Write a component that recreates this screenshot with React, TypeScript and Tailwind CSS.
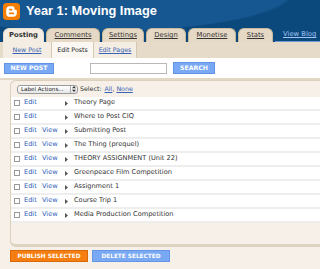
import React from "react";

const rows: { title: string; view: boolean }[] = [
  { title: "Theory Page", view: false },
  { title: "Where to Post CIQ", view: false },
  { title: "Submitting Post", view: true },
  { title: "The Thing (prequel)", view: true },
  { title: "THEORY ASSIGNMENT (Unit 22)", view: true },
  { title: "Greenpeace Film Competition", view: true },
  { title: "Assignment 1", view: true },
  { title: "Course Trip 1", view: true },
  { title: "Media Production Competition", view: true },
];

const tabs = [
  { label: "Posting", w: "w-[41px]", active: true },
  { label: "Comments", w: "w-[54px]", active: false },
  { label: "Settings", w: "w-[42px]", active: false },
  { label: "Design", w: "w-[40px]", active: false },
  { label: "Monetise", w: "w-[48px]", active: false },
  { label: "Stats", w: "w-[35px]", active: false },
];

function BloggerLogo() {
  return (
    <svg width="17" height="17" viewBox="0 0 24 24">
      <rect x="0" y="0" width="24" height="24" rx="5" fill="#f57d00" />
      <path
        d="M9 4.5h4.2c2 0 3 1.2 3 2.8v1.4c0 .6.4.9 1 .9h.6c.9 0 1.7.7 1.7 1.7v3.6c0 2.8-2.2 4.6-4.8 4.6H9c-2.6 0-4.5-2-4.5-4.5V9c0-2.6 2-4.5 4.5-4.5z"
        fill="#fff"
      />
      <rect x="8.4" y="8.2" width="5" height="2.3" rx="1.15" fill="#f57d00" />
      <rect x="8.4" y="13.5" width="7.4" height="2.3" rx="1.15" fill="#f57d00" />
    </svg>
  );
}

export default function App() {
  return (
    <div className="w-[320px] h-[269px] overflow-hidden bg-[#f6f0e8] font-['DejaVu_Sans',sans-serif]">
      {/* header */}
      <div className="h-[42px] bg-[#0b487b] bg-[radial-gradient(ellipse_200px_40px_at_95px_-8px,#175791_97%,transparent_100%)] flex flex-col">
        <div className="flex items-center h-[17px] mt-[3px] pl-[3px] gap-[6px]">
          <BloggerLogo />
          <span className="font-['Liberation_Sans',sans-serif] font-bold text-[12.8px] text-white leading-none">
            Year 1: Moving Image
          </span>
        </div>
        <div className="flex items-end h-[14px] mt-[8px] pl-[3px] gap-[2px]">
          {tabs.map((t) => (
            <div
              key={t.label}
              className={`${t.w} h-[14px] rounded-t-[6px] border border-b-0 flex items-center justify-center text-[6.8px] text-[#333] ${
                t.active
                  ? "bg-[#f4ede3] border-[#e8dfd1] font-bold"
                  : "bg-[#e5d9c6] border-[#c9b99e] underline"
              }`}
            >
              {t.label}
            </div>
          ))}
          <div className="flex-1 h-[14px] flex items-center pl-[8px] border-b border-[#6d9ad6] whitespace-nowrap">
            <span className="text-[6.8px] text-[#a3c6f7] underline">View Blog</span>
          </div>
        </div>
      </div>

      {/* sub tabs */}
      <div className="h-[16px] bg-[#e6dbc9] flex pl-[3px] text-[6.3px]">
        <div className="w-[49px] bg-[#f4ede3] border-r border-[#d6c8b1] flex items-center justify-center">
          <span className="text-[#3a63b6] underline">New Post</span>
        </div>
        <div className="w-[42px] bg-[#fbf8f4] border-r border-[#d6c8b1] flex items-center justify-center">
          <span className="text-[#222]">Edit Posts</span>
        </div>
        <div className="w-[43px] bg-[#f4ede3] border-r border-[#d6c8b1] flex items-center justify-center">
          <span className="text-[#3a63b6] underline">Edit Pages</span>
        </div>
      </div>

      {/* toolbar */}
      <div className="h-[22px] bg-white border-b-2 border-[#e3d8c6] flex items-center pl-[4px]">
        <div className="w-[50px] h-[11px] bg-[#79a8f4] border border-[#6093e4] flex items-center justify-center">
          <span className="text-white font-bold text-[6.2px]">NEW POST</span>
        </div>
        <div className="ml-[36px] w-[77px] h-[11px] border border-[#b8b8b8] bg-white" />
        <div className="ml-[6px] w-[42px] h-[12px] bg-[#79a8f4] border border-[#6093e4] flex items-center justify-center">
          <span className="text-white font-bold text-[6.2px]">SEARCH</span>
        </div>
      </div>

      {/* panel */}
      <div className="ml-[10px] w-[330px] border border-[#dccfbb] border-b-[3px] border-b-[#ded3c1] rounded-[6px] bg-[#f6f0e8] pb-[21px]">
        <div className="h-[16px] flex items-center pl-[6px] text-[6.3px]">
          <div className="w-[61px] h-[9px] border border-[#9a9a9a] rounded-[3px] bg-gradient-to-b from-white to-[#e6e6e6] flex items-center">
            <span className="flex-1 pl-[3px] text-[5.6px] text-[#222]">Label Actions...</span>
            <div className="w-[7px] h-full border-l border-[#aaa] flex items-center justify-center">
              <svg width="4" height="6" viewBox="0 0 4 6">
                <path d="M2 0L4 2.3H0z M2 6L4 3.7H0z" fill="#333" />
              </svg>
            </div>
          </div>
          <span className="ml-[2px] text-[#333]">Select:</span>
          <span className="ml-[3px] text-[#3a63b6] underline">All</span>
          <span className="text-[#333]">,</span>
          <span className="ml-[2px] text-[#3a63b6] underline">None</span>
        </div>
        <div className="bg-white">
          {rows.map((r) => (
            <div
              key={r.title}
              className="h-[14px] flex items-center border-b-2 border-[#eeeeee] pl-[3px] text-[6.6px]"
            >
              <div className="w-[10px]">
                <div className="w-[6px] h-[6px] border border-[#999] bg-white" />
              </div>
              <span className="w-[18px] text-[#2d5bb5]">Edit</span>
              <span className="w-[22px] text-[#2d5bb5]">{r.view ? "View" : ""}</span>
              <div className="w-[10px] pl-[1px]">
                <svg width="3" height="5" viewBox="0 0 3 5">
                  <path d="M0 0L3 2.5L0 5z" fill="#555" />
                </svg>
              </div>
              <span className="text-[#333] whitespace-nowrap">{r.title}</span>
            </div>
          ))}
        </div>
      </div>

      {/* bottom buttons */}
      <div className="flex pl-[10px] gap-[4px] mt-[3px]">
        <div className="w-[78px] h-[12px] bg-[#f67e10] border border-[#d86a08] flex items-center justify-center">
          <span className="text-white font-bold text-[5.8px]">PUBLISH SELECTED</span>
        </div>
        <div className="w-[78px] h-[12px] bg-[#7aa9f3] border border-[#6396e6] flex items-center justify-center">
          <span className="text-white font-bold text-[5.8px] whitespace-nowrap">DELETE SELECTED</span>
        </div>
      </div>
    </div>
  );
}
